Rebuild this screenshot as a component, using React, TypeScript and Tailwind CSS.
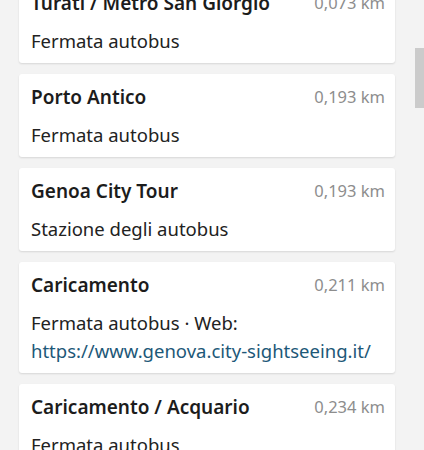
import React from 'react';

interface Stop {
  name: string;
  distance: string;
  kind: string;
  web?: string;
}

const stops: Stop[] = [
  { name: 'Turati / Metro San Giorgio', distance: '0,073 km', kind: 'Fermata autobus' },
  { name: 'Porto Antico', distance: '0,193 km', kind: 'Fermata autobus' },
  { name: 'Genoa City Tour', distance: '0,193 km', kind: 'Stazione degli autobus' },
  {
    name: 'Caricamento',
    distance: '0,211 km',
    kind: 'Fermata autobus',
    web: 'https://www.genova.city-sightseeing.it/',
  },
  { name: 'Caricamento / Acquario', distance: '0,234 km', kind: 'Fermata autobus' },
];

const StopCard: React.FC<{ stop: Stop }> = ({ stop }) => (
  <div className="bg-white rounded-[3px] shadow-[0_1px_2px_rgba(0,0,0,0.12)] pl-3 pr-[10px] pt-[10px] pb-[8px]">
    <div className="flex items-center justify-between h-[26px]">
      <span className="text-[19px] font-semibold text-[#1c1c1c]">{stop.name}</span>
      <span className="text-[16.5px] text-[#8d8d8d]">{stop.distance}</span>
    </div>
    <div className="mt-[11px] text-[18.5px] leading-[28px] text-[#222]">
      {stop.web ? (
        <>
          {stop.kind} · Web:
          <br />
          <span className="text-[#1d5878]">{stop.web}</span>
        </>
      ) : (
        stop.kind
      )}
    </div>
  </div>
);

export default function App() {
  return (
    <div
      className="relative w-[424px] h-[450px] overflow-hidden bg-[#f3f3f3]"
      style={{ fontFamily: '"Noto Sans", "Open Sans", sans-serif' }}
    >
      <div className="-mt-[20px] pl-[19px] pr-[29px] flex flex-col gap-[11px]">
        {stops.map((s) => (
          <StopCard key={s.name} stop={s} />
        ))}
      </div>
      {/* scroll thumb */}
      <div className="absolute left-[415px] top-[48px] w-[9px] h-[60px] bg-[#cbcbcb]" />
    </div>
  );
}
